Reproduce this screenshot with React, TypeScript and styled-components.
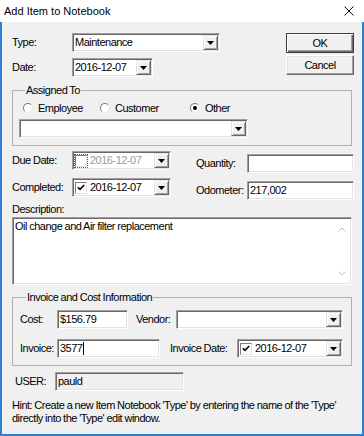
import React from "react";
import styled, { createGlobalStyle } from "styled-components";

const GlobalStyle = createGlobalStyle`
  html, body { margin: 0; padding: 0; background: #ffffff; }
  * { box-sizing: border-box; }
`;

const Window = styled.div`
  width: 364px;
  height: 436px;
  display: flex;
  flex-direction: column;
  font-family: "Liberation Sans", Arial, sans-serif;
  font-size: 11px;
  line-height: 13px;
  letter-spacing: -0.5px;
  word-spacing: -0.3px;
  color: #000;
`;

const TitleBar = styled.div`
  height: 22px;
  flex: none;
  display: flex;
  align-items: center;
  justify-content: space-between;
  padding: 0 10px 0 4px;
  background: #fff;
`;

const TitleText = styled.span`
  font-family: "Liberation Sans", Arial, sans-serif;
  font-size: 11px;
  letter-spacing: 0;
  word-spacing: 0;
`;

const Frame = styled.div`
  flex: 1;
  background: #f0f0f0;
  border: 2px solid #2b80d5;
  border-top: none;
  padding: 11px 8px 0 10px;
  display: flex;
  flex-direction: column;
`;

const TopSection = styled.div`
  display: flex;
  justify-content: space-between;
  align-items: flex-start;
`;

const FieldGrid = styled.div<{ $label: number; $gap: number; $offset?: number }>`
  display: grid;
  grid-template-columns: ${(p) => p.$label}px auto;
  row-gap: ${(p) => p.$gap}px;
  align-items: center;
  margin-top: ${(p) => p.$offset ?? 0}px;
`;

const Label = styled.span<{ $w?: number; $ml?: number }>`
  white-space: nowrap;
  ${(p) => (p.$w ? `width: ${p.$w}px; flex: none;` : "")}
  ${(p) => (p.$ml ? `margin-left: ${p.$ml}px;` : "")}
`;

const Sunken = styled.div<{ $w: number; $h?: number; $bg?: string; $muted?: boolean }>`
  width: ${(p) => p.$w}px;
  height: ${(p) => p.$h ?? 19}px;
  flex: none;
  background: ${(p) => p.$bg ?? "#fff"};
  color: ${(p) => (p.$muted ? "#9a9a9a" : "#000")};
  border: 1px solid;
  border-color: #a0a0a0 #ffffff #ffffff #a0a0a0;
  box-shadow: inset 1px 1px 0 #696969, inset -1px -1px 0 #e3e3e3;
  padding: 1px 1px 1px 2px;
  display: flex;
  align-items: center;
  white-space: nowrap;
`;

const MultiLine = styled(Sunken)`
  align-items: stretch;
  padding: 1px 1px 1px 2px;
`;

const MultiText = styled.div`
  flex: 1;
  padding-top: 1px;
`;

const ScrollColumn = styled.div`
  width: 17px;
  flex: none;
  display: flex;
  flex-direction: column;
  justify-content: space-between;
  align-items: center;
  padding: 8px 0 7px;
`;

const DropButton = styled.span`
  margin-left: auto;
  width: 15px;
  height: 100%;
  flex: none;
  background: #f0f0f0;
  border: 1px solid;
  border-color: #e3e3e3 #696969 #696969 #e3e3e3;
  box-shadow: inset 1px 1px 0 #fff, inset -1px -1px 0 #a0a0a0;
  display: flex;
  align-items: center;
  justify-content: center;
`;

const ButtonStack = styled.div`
  display: flex;
  flex-direction: column;
  gap: 2px;
`;

const PushButton = styled.button<{ $default?: boolean }>`
  width: 68px;
  height: 20px;
  padding: 0;
  font: inherit;
  letter-spacing: inherit;
  word-spacing: inherit;
  color: #000;
  background: #f0f0f0;
  border: 1px solid;
  border-color: ${(p) => (p.$default ? "#3c3c3c" : "#fff #696969 #696969 #fff")};
  box-shadow: ${(p) =>
    p.$default
      ? "inset 1px 1px 0 #fff, inset -1px -1px 0 #696969, inset -2px -2px 0 #a0a0a0"
      : "inset -1px -1px 0 #a0a0a0, inset 1px 1px 0 #e3e3e3"};
`;

const GroupBox = styled.fieldset<{ $mt: number; $pad: string }>`
  margin: ${(p) => p.$mt}px 0 0 0;
  padding: ${(p) => p.$pad};
  width: 340px;
  min-width: 0;
  border: 1px solid #b0b0b0;
`;

const Legend = styled.legend`
  padding: 0 1px;
  margin-left: 6px;
  line-height: 13px;
`;

const RadioRow = styled.div`
  display: flex;
  height: 14px;
  align-items: center;
  padding-left: 4px;
`;

const RadioItem = styled.label<{ $w?: number }>`
  display: flex;
  align-items: center;
  gap: 5px;
  ${(p) => (p.$w ? `width: ${p.$w}px;` : "")}
`;

const RadioCircle = styled.span<{ $checked?: boolean }>`
  width: 10px;
  height: 10px;
  border-radius: 50%;
  background: #fff;
  border: 1px solid;
  border-color: #7d7d7d #e6e6e6 #e6e6e6 #7d7d7d;
  display: flex;
  align-items: center;
  justify-content: center;
  flex: none;
  &::after {
    content: "";
    width: 4px;
    height: 4px;
    border-radius: 50%;
    background: #000;
    display: ${(p) => (p.$checked ? "block" : "none")};
  }
`;

const Stack = styled.div<{ $mt?: number; $gap?: number }>`
  display: flex;
  flex-direction: column;
  gap: ${(p) => p.$gap ?? 0}px;
  margin-top: ${(p) => p.$mt ?? 0}px;
`;

const SplitRow = styled.div<{ $mt?: number }>`
  display: flex;
  justify-content: space-between;
  align-items: flex-start;
  margin-top: ${(p) => p.$mt ?? 0}px;
`;

const FormRow = styled.div<{ $mt?: number }>`
  display: flex;
  align-items: center;
  margin-top: ${(p) => p.$mt ?? 0}px;
`;

const CheckBox = styled.span<{ $muted?: boolean }>`
  width: 12px;
  height: 12px;
  flex: none;
  margin-right: 3px;
  background: #fff;
  border: 1px solid;
  border-color: #7d7d7d #e3e3e3 #e3e3e3 #7d7d7d;
  display: flex;
  align-items: center;
  justify-content: center;
  ${(p) => (p.$muted ? "outline: 1px dotted #5a5a5a; outline-offset: 0px;" : "")}
`;

const Caret = styled.span`
  display: inline-block;
  width: 1px;
  height: 13px;
  background: #000;
  margin-left: 1px;
`;

const Hint = styled.p`
  margin: 8px 0 0 0;
`;

const Arrow = () => (
  <svg width="7" height="4" viewBox="0 0 7 4">
    <polygon points="0,0 7,0 3.5,4" fill="#000" />
  </svg>
);

const Check = () => (
  <svg width="8" height="7" viewBox="0 0 8 7">
    <polyline points="0.8,3.2 3,5.4 7.2,1" fill="none" stroke="#000" strokeWidth="1.6" />
  </svg>
);

const Chevron = ({ up }: { up?: boolean }) => (
  <svg width="8" height="5" viewBox="0 0 8 5">
    <polyline
      points={up ? "0.5,4.5 4,1 7.5,4.5" : "0.5,0.5 4,4 7.5,0.5"}
      fill="none"
      stroke="#c2c2c2"
      strokeWidth="1"
    />
  </svg>
);

const CloseIcon = () => (
  <svg width="10" height="10" viewBox="0 0 10 10">
    <path d="M0.5 0.5 L9.5 9.5 M9.5 0.5 L0.5 9.5" stroke="#111" strokeWidth="1" />
  </svg>
);

export default function App() {
  return (
    <>
      <GlobalStyle />
      <Window>
        <TitleBar>
          <TitleText>Add Item to Notebook</TitleText>
          <CloseIcon />
        </TitleBar>
        <Frame>
          <TopSection>
            <FieldGrid $label={60} $gap={6}>
              <Label>Type:</Label>
              <Sunken $w={148}>
                Maintenance
                <DropButton>
                  <Arrow />
                </DropButton>
              </Sunken>
              <Label>Date:</Label>
              <Sunken $w={81}>
                2016-12-07
                <DropButton>
                  <Arrow />
                </DropButton>
              </Sunken>
            </FieldGrid>
            <ButtonStack>
              <PushButton $default>OK</PushButton>
              <PushButton>Cancel</PushButton>
            </ButtonStack>
          </TopSection>

          <GroupBox $mt={7} $pad="4px 8px 7px 6px">
            <Legend>Assigned To</Legend>
            <RadioRow>
              <RadioItem $w={77}>
                <RadioCircle />
                Employee
              </RadioItem>
              <RadioItem $w={90}>
                <RadioCircle />
                Customer
              </RadioItem>
              <RadioItem>
                <RadioCircle $checked />
                Other
              </RadioItem>
            </RadioRow>
            <Stack $mt={4}>
              <Sunken $w={229}>
                <DropButton>
                  <Arrow />
                </DropButton>
              </Sunken>
            </Stack>
          </GroupBox>

          <SplitRow $mt={5}>
            <FieldGrid $label={60} $gap={8}>
              <Label>Due Date:</Label>
              <Sunken $w={99} $muted>
                <CheckBox $muted />
                2016-12-07
                <DropButton>
                  <Arrow />
                </DropButton>
              </Sunken>
              <Label>Completed:</Label>
              <Sunken $w={99}>
                <CheckBox>
                  <Check />
                </CheckBox>
                2016-12-07
                <DropButton>
                  <Arrow />
                </DropButton>
              </Sunken>
            </FieldGrid>
            <FieldGrid $label={51} $gap={8} $offset={3}>
              <Label>Quantity:</Label>
              <Sunken $w={107} />
              <Label>Odometer:</Label>
              <Sunken $w={107}>217,002</Sunken>
            </FieldGrid>
          </SplitRow>

          <Stack $mt={3} $gap={1}>
            <Label>Description:</Label>
            <MultiLine $w={340} $h={68}>
              <MultiText>Oil change and Air filter replacement</MultiText>
              <ScrollColumn>
                <Chevron up />
                <Chevron />
              </ScrollColumn>
            </MultiLine>
          </Stack>

          <GroupBox $mt={6} $pad="6px 8px 7px 7px">
            <Legend>Invoice and Cost Information</Legend>
            <FormRow>
              <Label $w={37}>Cost:</Label>
              <Sunken $w={71}>$156.79</Sunken>
              <Label $w={40} $ml={8}>
                Vendor:
              </Label>
              <Sunken $w={167}>
                <DropButton>
                  <Arrow />
                </DropButton>
              </Sunken>
            </FormRow>
            <FormRow $mt={10}>
              <Label $w={37}>Invoice:</Label>
              <Sunken $w={103}>
                3577
                <Caret />
              </Sunken>
              <Label $w={67} $ml={10}>
                Invoice Date:
              </Label>
              <Sunken $w={106}>
                <CheckBox>
                  <Check />
                </CheckBox>
                2016-12-07
                <DropButton>
                  <Arrow />
                </DropButton>
              </Sunken>
            </FormRow>
          </GroupBox>

          <FormRow $mt={6}>
            <Label $w={40} $ml={3}>
              USER:
            </Label>
            <Sunken $w={129} $bg="#f0f0f0">
              pauld
            </Sunken>
          </FormRow>

          <Hint>
            Hint: Create a new Item Notebook 'Type' by entering the name of the 'Type'
            <br />
            directly into the 'Type' edit window.
          </Hint>
        </Frame>
      </Window>
    </>
  );
}
